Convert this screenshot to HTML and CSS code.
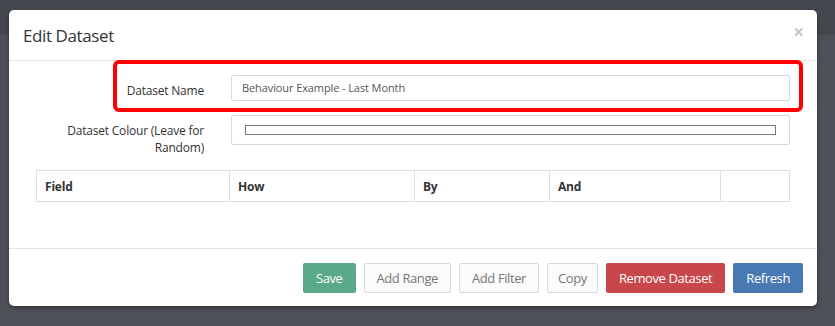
FILE: index.html
```html
<!DOCTYPE html>
<html lang="en">
<head>
    <meta charset="UTF-8">
    <meta name="viewport" content="width=device-width, initial-scale=1.0">
    <title>Edit Dataset</title>
    <link rel="stylesheet" href="styles.css">
</head>
<body>

    <div class="page-bar"></div>

    <div class="modal">
        <div class="modal-header">
            <h4 class="modal-title">Edit Dataset</h4>
            <span class="close">&times;</span>
        </div>

        <div class="modal-body">
            <div class="form-group highlighted">
                <label class="control-label">Dataset Name</label>
                <div class="form-control">Behaviour Example - Last Month</div>
                <div class="highlight-box"></div>
            </div>

            <div class="form-group">
                <label class="control-label">Dataset Colour (Leave for Random)</label>
                <div class="form-control colour-control">
                    <div class="colour-swatch"></div>
                </div>
            </div>

            <table class="filter-table">
                <colgroup>
                    <col style="width: 193px">
                    <col style="width: 185px">
                    <col style="width: 135px">
                    <col style="width: 171px">
                    <col>
                </colgroup>
                <thead>
                    <tr>
                        <th>Field</th>
                        <th>How</th>
                        <th>By</th>
                        <th>And</th>
                        <th></th>
                    </tr>
                </thead>
            </table>
        </div>

        <div class="modal-footer">
            <button class="btn btn-success">Save</button>
            <button class="btn btn-default">Add Range</button>
            <button class="btn btn-default">Add Filter</button>
            <button class="btn btn-default btn-copy">Copy</button>
            <button class="btn btn-danger">Remove Dataset</button>
            <button class="btn btn-primary">Refresh</button>
        </div>
    </div>

</body>
</html>
```

FILE: styles.css
```css
body {
    font-family: "Open Sans", Arial, sans-serif;
    background-color: #4e5058;
    color: #333;
    margin: 0;
    padding: 0;
    height: 326px;
    overflow: hidden;
}

.page-bar {
    height: 35px;
    background-color: #45474f;
}

.modal {
    position: absolute;
    top: 10px;
    left: 9px;
    width: 808px;
    background-color: #fff;
    border-radius: 5px;
    box-shadow: 0 2px 4px rgba(0, 0, 0, 0.35);
}

.modal-header {
    display: flex;
    align-items: center;
    justify-content: space-between;
    height: 50px;
    padding: 0 14px;
    border-bottom: 1px solid #e5e5e5;
}

.modal-title {
    margin: 0;
    font-size: 17px;
    font-weight: normal;
    letter-spacing: -0.4px;
    color: #333;
}

.close {
    font-size: 19px;
    font-weight: bold;
    line-height: 1;
    color: #c8c8c8;
    margin-top: -6px;
    margin-right: -1px;
}

.modal-body {
    padding: 14px 27px 20px 27px;
}

.form-group {
    display: flex;
    align-items: flex-start;
    margin-bottom: 14px;
}

.highlighted {
    position: relative;
}

/* red annotation frame over the first row */
.highlight-box {
    position: absolute;
    top: -15px;
    left: 77px;
    right: -13px;
    bottom: -11px;
    border: 4px solid #ff0000;
    border-radius: 6px;
    pointer-events: none;
}

.control-label {
    width: 168px;
    flex-shrink: 0;
    margin-right: 27px;
    padding-top: 7px;
    font-size: 12px;
    line-height: 17px;
    letter-spacing: -0.2px;
    text-align: right;
}

.form-control {
    flex: 1;
    box-sizing: border-box;
    height: 26px;
    padding: 0 10px;
    border: 1px solid #d5d8de;
    border-radius: 2px;
    font-size: 11px;
    letter-spacing: -0.1px;
    line-height: 24px;
    color: #555;
}

.colour-control {
    height: 30px;
    padding: 9px 13px;
}

.colour-swatch {
    height: 10px;
    box-sizing: border-box;
    border: 1px solid #777;
    background-color: #fff;
}

.filter-table {
    width: 100%;
    table-layout: fixed;
    border-collapse: collapse;
    margin-top: 2px;
    margin-bottom: 26px;
}

.filter-table th {
    height: 30px;
    padding: 0 8px;
    border: 1px solid #dddde2;
    font-size: 12px;
    font-weight: bold;
    letter-spacing: -0.2px;
    text-align: left;
    color: #333;
}

.modal-footer {
    display: flex;
    justify-content: flex-end;
    gap: 8px;
    padding: 14px 14px 13px 14px;
    border-top: 1px solid #e5e5e5;
}

.btn {
    height: 30px;
    padding: 0 12px;
    border: 1px solid transparent;
    border-radius: 2px;
    font-family: "Open Sans", Arial, sans-serif;
    font-size: 13px;
    letter-spacing: -0.4px;
    cursor: pointer;
}

.btn-copy {
    padding: 0 10px;
}

.btn-success {
    background-color: #5aa988;
    color: #fff;
}

.btn-default {
    background-color: #fbfbfc;
    border-color: #d5d9e0;
    color: #777;
}

.btn-danger {
    background-color: #c9464b;
    color: #fff;
}

.btn-primary {
    background-color: #4879b3;
    color: #fff;
}
```
